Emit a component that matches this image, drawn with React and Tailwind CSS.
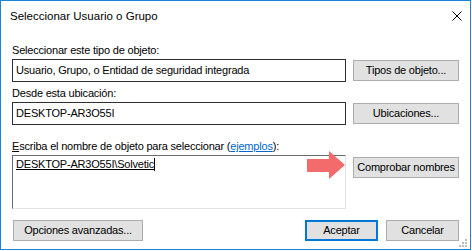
import React from 'react';

const Btn = ({ children, className = '' }) => (
  <div
    className={`h-[21px] flex items-center justify-center bg-[#e1e1e1] border border-[#adadad] ${className}`}
  >
    {children}
  </div>
);

export default function App() {
  return (
    <div className="w-[472px] h-[251px] bg-white font-['Liberation_Sans',Arial,sans-serif] text-[11px] leading-[13px] tracking-[-0.2px] text-black">
      <div className="relative w-[471px] h-[250px] border border-[#1883d7] bg-white flex flex-col">
        {/* Title bar */}
        <div className="flex items-center justify-between h-[30px] pl-[9px] pr-[8px]">
          <span className="text-[11.5px] leading-[16px] tracking-normal">Seleccionar Usuario o Grupo</span>
          <svg width="10" height="10" viewBox="0 0 10 10">
            <path d="M0.5 0.5 L9.5 9.5 M9.5 0.5 L0.5 9.5" stroke="#000" strokeWidth="1" />
          </svg>
        </div>

        <div className="flex flex-col px-[11px] pt-[13px]">
          <div>Seleccionar este tipo de objeto:</div>
          <div className="mt-[2px] flex items-center gap-[7px]">
            <div className="w-[334px] h-[23px] border border-[#2f2f2f] px-[3px] flex items-center">
              Usuario, Grupo, o Entidad de seguridad integrada
            </div>
            <Btn className="w-[106px]">Tipos de objeto...</Btn>
          </div>

          <div className="mt-[5px]">Desde esta ubicación:</div>
          <div className="mt-[2px] flex items-center gap-[7px]">
            <div className="w-[334px] h-[23px] border border-[#2f2f2f] px-[3px] flex items-center">
              DESKTOP-AR3O55I
            </div>
            <Btn className="w-[106px]">Ubicaciones...</Btn>
          </div>

          <div className="mt-[15px]">
            <span className="underline">E</span>scriba el nombre de objeto para seleccionar (
            <span className="text-[#0066cc] underline">ejemplos</span>):
          </div>
          <div className="relative mt-[2px] flex items-start gap-[7px]">
            <div className="w-[334px] h-[54px] border border-t-[#6b6b6b] border-l-[#6b6b6b] border-r-[#e3e3e3] border-b-[#e3e3e3] px-[3px] pt-[2px] flex items-start">
              <span className="underline">DESKTOP-AR3O55I\Solvetic</span>
              <span className="inline-block w-px h-[13px] bg-black" />
            </div>
            <Btn className="w-[106px] mt-[2px]">Comprobar nombres</Btn>

            {/* Red arrow */}
            <svg
              className="absolute left-[295px] top-[-4px]"
              width="38"
              height="28"
              viewBox="0 0 38 28"
            >
              <polygon points="0,8 22,8 22,0 38,14 22,28 22,21 0,21" fill="#f36b6b" />
            </svg>
          </div>

          <div className="mt-[11px] flex justify-between">
            <Btn className="w-[130px] ml-[1px]">Opciones avanzadas...</Btn>
            <div className="flex gap-[8px]">
              <Btn className="w-[73px] !border-2 !border-[#0078d7]">Aceptar</Btn>
              <Btn className="w-[73px]">Cancelar</Btn>
            </div>
          </div>
        </div>

        {/* Size grip */}
        <div className="absolute right-[3px] bottom-[2px] w-[8px] h-[8px]">
          <div className="absolute right-0 top-0 w-[2px] h-[2px] bg-[#bcbcbc]" />
          <div className="absolute right-[3px] top-[3px] w-[2px] h-[2px] bg-[#bcbcbc]" />
          <div className="absolute right-0 top-[3px] w-[2px] h-[2px] bg-[#bcbcbc]" />
          <div className="absolute right-[6px] top-[6px] w-[2px] h-[2px] bg-[#bcbcbc]" />
          <div className="absolute right-[3px] top-[6px] w-[2px] h-[2px] bg-[#bcbcbc]" />
          <div className="absolute right-0 top-[6px] w-[2px] h-[2px] bg-[#bcbcbc]" />
        </div>
      </div>
    </div>
  );
}
